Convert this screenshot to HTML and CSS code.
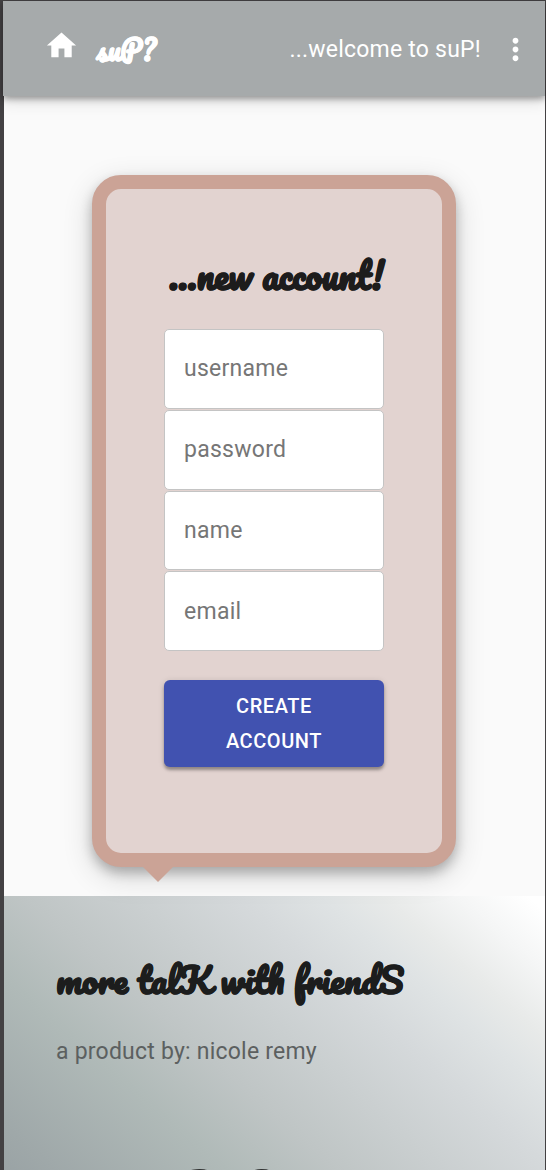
FILE: index.html
```
<!DOCTYPE html>
<html lang="en">
<head>
<meta charset="utf-8">
<title>suP?</title>
<link rel="stylesheet" href="styles.css">
</head>
<body>
<div class="app">
  <header class="bar">
    <svg class="home" viewBox="0 0 24 24"><path d="M10 20v-6h4v6h5v-8h3L12 3 2 12h3v8z"/></svg>
    <span class="script brand">suP?</span>
    <span class="welcome">...welcome to suP!</span>
    <svg class="dots" viewBox="0 0 24 24"><path d="M12 8c1.100 0 2-.9 2-2s-.9-2-2-2-2 .9-2 2 .9 2 2 2zm0 2c-1.100 0-2 .9-2 2s.9 2 2 2 2-.9 2-2-.9-2-2-2zm0 6c-1.100 0-2 .9-2 2s.9 2 2 2 2-.9 2-2-.9-2-2-2z"/></svg>
  </header>
  <main class="main">
    <form class="card">
      <h2 class="script title">...new account!</h2>
      <div class="fields">
        <input class="field" type="text" placeholder="username">
        <input class="field" type="password" placeholder="password">
        <input class="field" type="text" placeholder="name">
        <input class="field" type="email" placeholder="email">
      </div>
      <button class="submit" type="button">CREATE ACCOUNT</button>
    </form>
  </main>
  <footer class="footer">
    <h2 class="script tagline">more talK with friendS</h2>
    <p class="credit">a product by: nicole remy</p>
    <div class="script logo">suP?</div>
  </footer>
</div>
</body>
</html>
```
FILE: styles.css
```
* { box-sizing: border-box; }
body {
  margin: 0;
  height: 1170px;
  overflow: hidden;
  background: #434143;
  font-family: Roboto, "Liberation Sans", sans-serif;
}
.app {
  display: flex;
  flex-direction: column;
  height: 1170px;
  padding: 1px 1px 0 3px;
  overflow: hidden;
}
.script {
  margin: 0;
  font-family: Pacifico, Lato, cursive;
  font-weight: 700;
  white-space: nowrap;
  -webkit-text-stroke: .5px currentColor;
}
.bar {
  display: flex;
  flex: none;
  align-items: center;
  height: 95px;
  padding: 0 12px 0 41px;
  background: #a6aaab;
  color: #fff;
  position: relative;
  box-shadow: 0 3px 6px rgba(0,0,0,.32), 0 6px 14px rgba(0,0,0,.12);
}
.home { width: 35px; height: 35px; margin-top: -7px; fill: #fff; }
.brand { margin: 1px 0 0 17.5px; font-size: 27px; }
.welcome {
  margin-left: auto;
  padding-top: 2px;
  font-size: 23px;
  line-height: 34px;
  letter-spacing: .22px;
}
.dots { width: 35px; height: 35px; margin: 2px 0 0 17px; fill: #fff; }
.main {
  flex: none;
  height: 800px;
  margin-left: 1px;
  padding: 79px 0 0 88px;
  background: #fafafa;
}
.card {
  position: relative;
  width: 364px;
  height: 692px;
  padding: 58px 58px 0;
  border: 14px solid #cba396;
  border-radius: 29px;
  background: #e2d3d0;
  box-shadow: 0 6px 12px rgba(0,0,0,.24), 0 9px 30px rgba(0,0,0,.16);
}
.card::after {
  content: "";
  position: absolute;
  left: 37px;
  top: 678px;
  border: 15px solid transparent;
  border-top-color: #cba396;
  border-bottom: 0;
}
.title { padding-left: 5px; font-size: 36px; line-height: 56px; color: #1d1c1c; }
.fields { display: flex; flex-direction: column; gap: .9px; margin-top: 26px; }
.field {
  width: 220px;
  height: 79.9px;
  padding: 0 19px .5px;
  border: 1px solid #c4c4c4;
  border-radius: 5px;
  background: #fff;
  font-family: Roboto, sans-serif;
  font-size: 23px;
  letter-spacing: .26px;
}
.field::placeholder { color: #767676; opacity: 1; }
.submit {
  width: 220px;
  height: 87px;
  margin-top: 28.6px;
  padding: 2px 23px 0;
  border: 0;
  border-radius: 6px;
  background: #4152b0;
  color: #fff;
  font-family: Roboto, sans-serif;
  font-size: 20px;
  font-weight: 500;
  line-height: 35px;
  letter-spacing: .57px;
  box-shadow: 0 3px 3px rgba(0,0,0,.3), 0 1px 6px rgba(0,0,0,.14);
}
.footer {
  flex: none;
  height: 274px;
  margin-left: 1px;
  padding: 52px 0 0 52px;
  background: linear-gradient(41deg, #9aa3a5 0%, #9fa8a9 6%, #b0bab8 26%, #bfc5c5 39%, #d5d9db 64%, #dfe3e4 74%, #e8eae9 81%, #f5f6f6 90%, #fff 98%);
}
.tagline { font-size: 34.9px; line-height: 64px; color: #1c1d1d; }
.credit {
  margin: 23px 0 0;
  font-size: 23px;
  line-height: 34px;
  letter-spacing: .22px;
  color: #5c6060;
}
.logo { margin-top: 76.5px; font-size: 101px; line-height: 134px; color: #1c1d1d; }
```
